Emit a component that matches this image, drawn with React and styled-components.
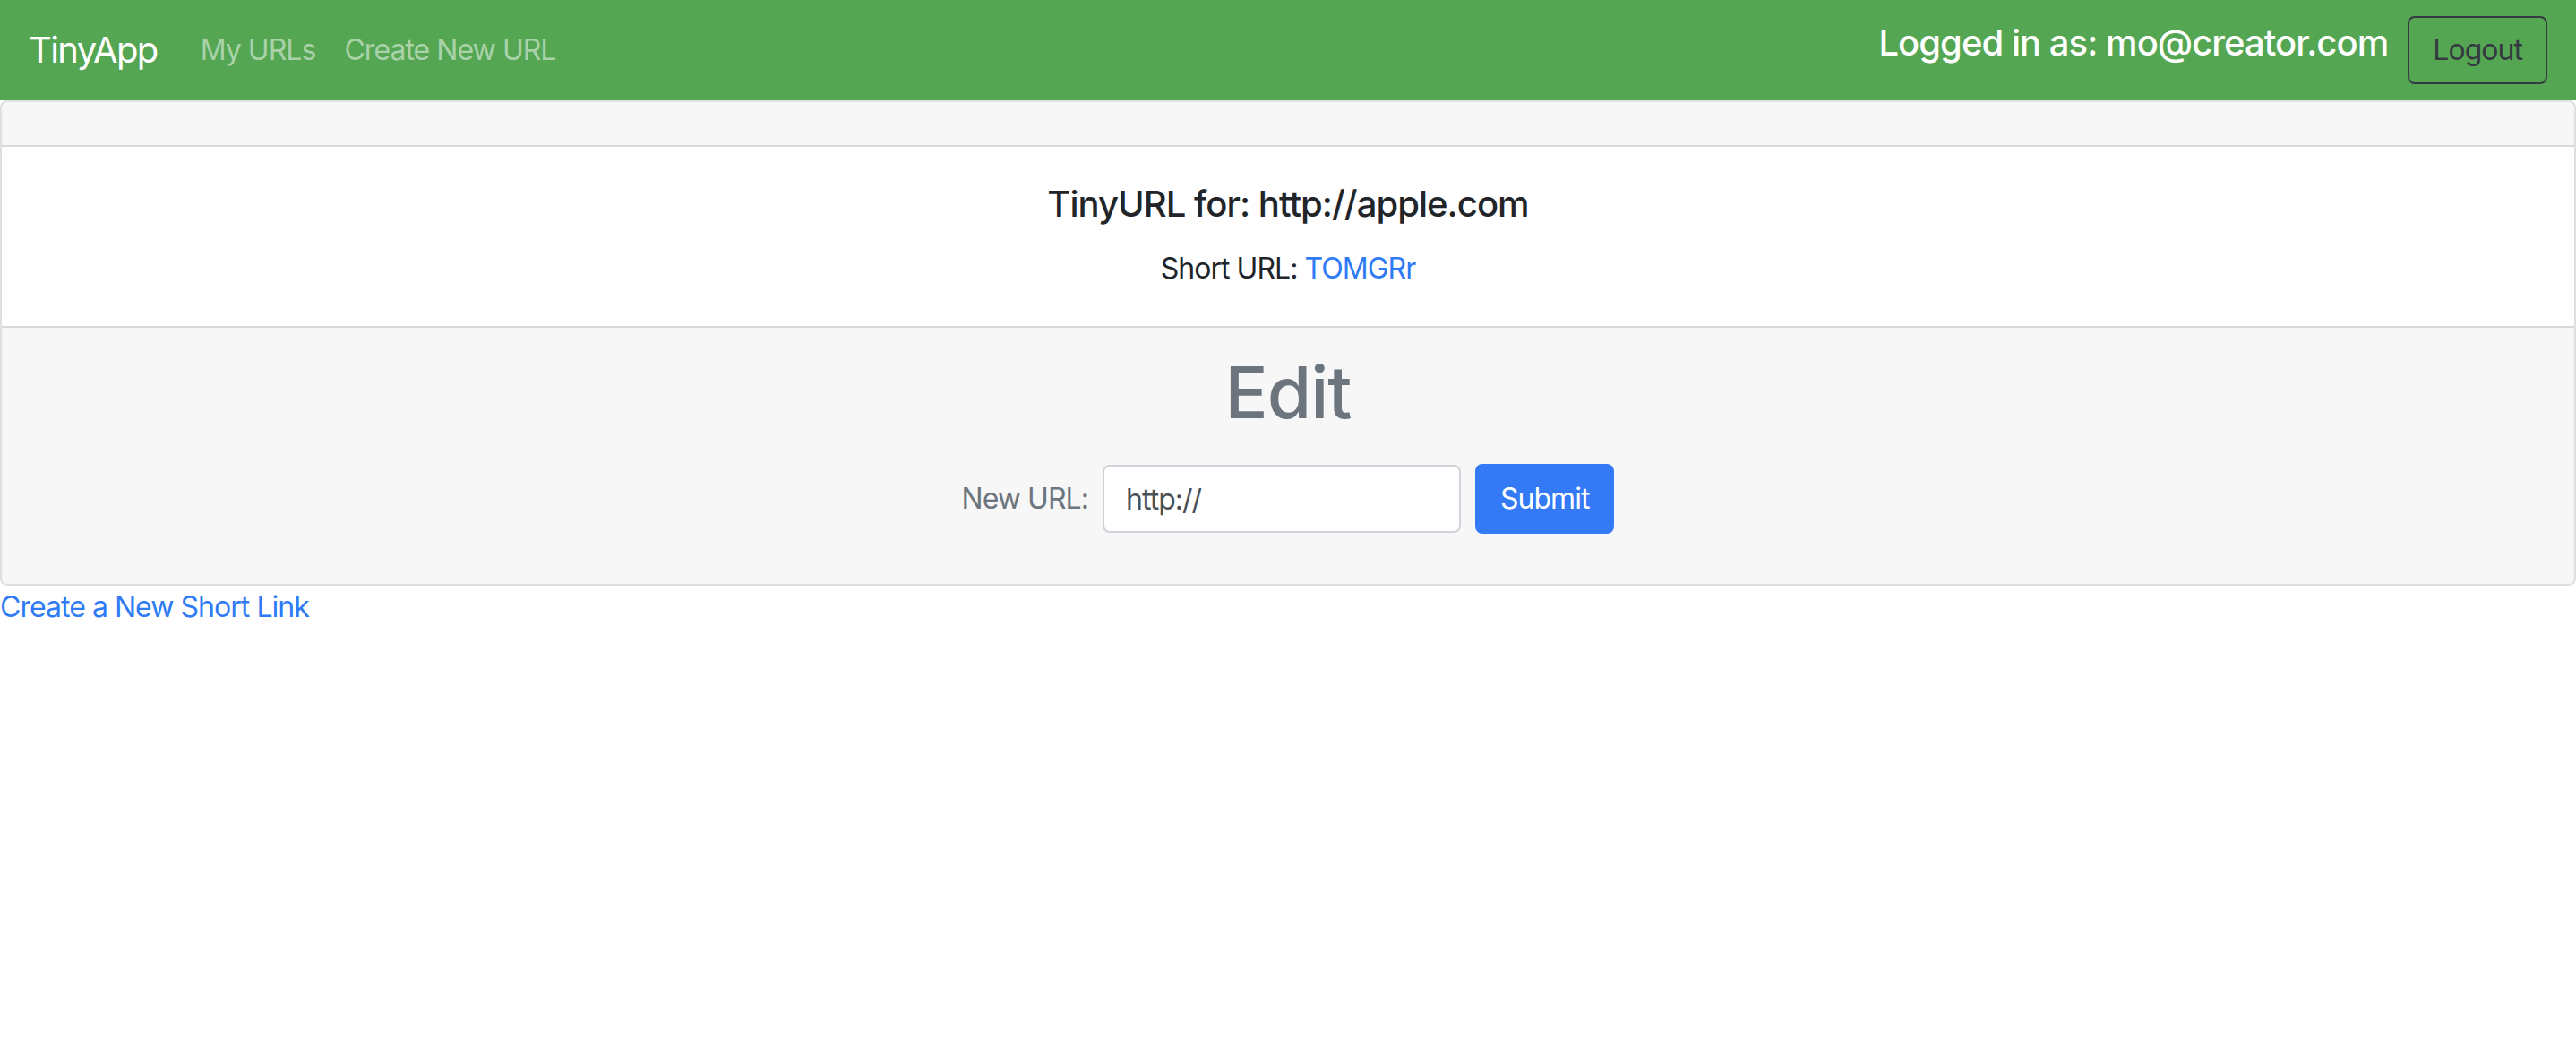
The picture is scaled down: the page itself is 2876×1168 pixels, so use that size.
import styled, { createGlobalStyle } from "styled-components";

const GlobalStyle = createGlobalStyle`
  body {
    margin: 0;
    font-family: Inter, "Noto Sans", sans-serif;
    font-size: 32px;
    line-height: 1.5;
    letter-spacing: -0.03em;
    color: #212529;
    background: #fff;
  }
  * { box-sizing: border-box; }
`;

const Nav = styled.nav`
  display: flex;
  align-items: center;
  justify-content: space-between;
  height: 112px;
  padding: 16px 32px;
  background-color: #54a653;
`;

const NavLeft = styled.div`
  display: flex;
  align-items: center;
`;

const Brand = styled.a`
  font-size: 40px;
  letter-spacing: -0.04em;
  color: #fff;
  text-decoration: none;
  margin-right: 32px;
  line-height: 1.5;
`;

const NavLink = styled.a`
  font-size: 32px;
  color: rgba(255, 255, 255, 0.5);
  text-decoration: none;
  padding: 16px;
`;

const NavRight = styled.div`
  display: flex;
  align-items: center;
  gap: 22px;
`;

const LoggedIn = styled.h5`
  font-size: 40px;
  font-weight: 500;
  line-height: 1.2;
  color: #fff;
  margin: 0 0 16px 0;
`;

const OutlineButton = styled.button`
  font-family: inherit;
  font-size: 32px;
  letter-spacing: inherit;
  line-height: 1.5;
  height: 76px;
  padding: 12px 26px;
  color: #343a40;
  background: transparent;
  border: 2px solid #343a40;
  border-radius: 8px;
`;

const Card = styled.div`
  border: 2px solid rgba(0, 0, 0, 0.125);
  border-radius: 8px;
  text-align: center;
`;

const CardHeader = styled.div`
  height: 50px;
  background-color: rgba(0, 0, 0, 0.03);
  border-bottom: 2px solid rgba(0, 0, 0, 0.125);
  border-radius: 6px 6px 0 0;
`;

const CardBody = styled.div`
  padding: 40px;
`;

const CardTitle = styled.h5`
  font-size: 40px;
  font-weight: 500;
  line-height: 1.2;
  margin: 0 0 24px 0;
`;

const CardText = styled.p`
  margin: 0;
`;

const Link = styled.a`
  color: #2f7bf6;
  text-decoration: none;
`;

const CardFooter = styled.div`
  padding: 24px 40px;
  background-color: rgba(0, 0, 0, 0.03);
  border-top: 2px solid rgba(0, 0, 0, 0.125);
  border-radius: 0 0 6px 6px;
`;

const Heading = styled.h1`
  font-size: 80px;
  font-weight: 500;
  line-height: 1.2;
  color: #6c757d;
  margin: 0 0 32px 0;
`;

const Form = styled.form`
  display: flex;
  align-items: center;
  justify-content: center;
  gap: 16px;
  margin-bottom: 32px;
`;

const Label = styled.label`
  color: #6c757d;
`;

const Input = styled.input`
  width: 400px;
  height: 76px;
  padding: 12px 24px;
  font-family: inherit;
  font-size: 32px;
  letter-spacing: inherit;
  color: #495057;
  background: #fff;
  border: 2px solid #ced4da;
  border-radius: 8px;
  outline: none;
`;

const Submit = styled.button`
  font-family: inherit;
  font-size: 32px;
  letter-spacing: inherit;
  line-height: 1.5;
  height: 78px;
  padding: 12px 26px;
  color: #fff;
  background-color: #3479f6;
  border: 2px solid #3479f6;
  border-radius: 8px;
`;

const BottomLink = styled(Link)`
  display: inline-block;
  line-height: 48px;
`;

export default function App() {
  return (
    <>
      <GlobalStyle />
      <Nav>
        <NavLeft>
          <Brand href="#">TinyApp</Brand>
          <NavLink href="#">My URLs</NavLink>
          <NavLink href="#">Create New URL</NavLink>
        </NavLeft>
        <NavRight>
          <LoggedIn>Logged in as: mo@creator.com</LoggedIn>
          <OutlineButton>Logout</OutlineButton>
        </NavRight>
      </Nav>
      <Card>
        <CardHeader />
        <CardBody>
          <CardTitle>TinyURL for: http://apple.com</CardTitle>
          <CardText>
            Short URL: <Link href="#">TOMGRr</Link>
          </CardText>
        </CardBody>
        <CardFooter>
          <Heading>Edit</Heading>
          <Form onSubmit={(e) => e.preventDefault()}>
            <Label>New URL:</Label>
            <Input type="text" defaultValue="http://" />
            <Submit type="submit">Submit</Submit>
          </Form>
        </CardFooter>
      </Card>
      <BottomLink href="#">Create a New Short Link</BottomLink>
    </>
  );
}
